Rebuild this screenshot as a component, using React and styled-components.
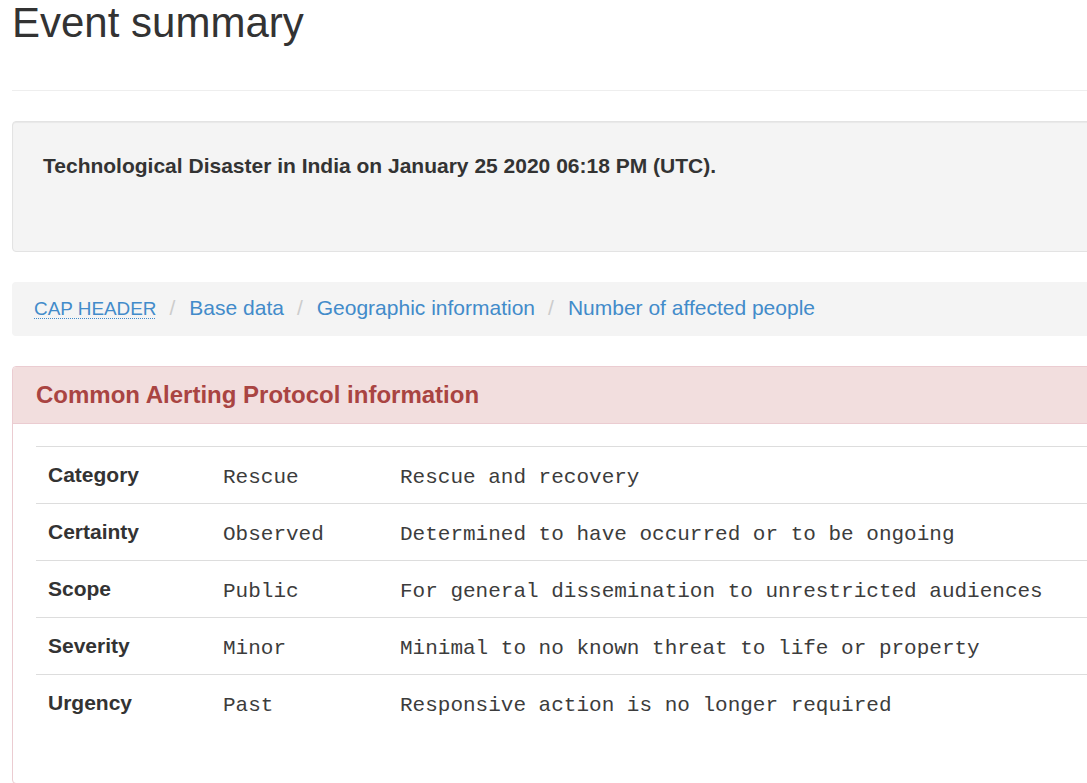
import React from 'react';
import styled, { createGlobalStyle } from 'styled-components';

const GlobalStyle = createGlobalStyle`
  html, body {
    margin: 0;
    padding: 0;
    overflow: hidden;
    background: #fff;
  }
  body {
    font-family: "Liberation Sans", Arial, Helvetica, sans-serif;
    font-size: 21px;
    line-height: 30px;
    color: #333;
  }
`;

const Page = styled.div`
  width: 1220px;
  padding: 0 12px;
`;

const PageHeader = styled.div`
  padding-bottom: 44px;
  border-bottom: 1px solid #eee;
  margin-bottom: 30px;
`;

const Title = styled.h1`
  margin: 0;
  font-size: 42px;
  font-weight: 400;
  line-height: 46px;
  color: #333;
`;

const Well = styled.div`
  background: #f4f4f4;
  border: 1px solid #e3e3e3;
  border-radius: 4px;
  padding: 29px 30px 70px;
  margin-bottom: 30px;
  box-shadow: inset 0 1px 1px rgba(0, 0, 0, 0.05);
`;

const Summary = styled.p`
  margin: 0;
  font-weight: 700;
`;

const Crumbs = styled.ol`
  list-style: none;
  margin: 0 0 30px;
  padding: 11px 22px 12px;
  background: #f4f4f4;
  border-radius: 4px;
  display: flex;
  align-items: baseline;
`;

const Crumb = styled.li`
  color: #428bca;
  & + &::before {
    content: "/";
    color: #ccc;
    padding: 0 14px 0 13px;
  }
`;

const Abbr = styled.abbr`
  font-size: 90%;
  text-decoration: underline dotted #428bca;
  text-underline-offset: 3px;
  text-decoration-thickness: 1px;
`;

const Panel = styled.div`
  border: 1px solid #ebccd1;
  border-radius: 4px;
`;

const PanelHeading = styled.div`
  background: #f2dede;
  border-bottom: 1px solid #ebccd1;
  border-radius: 3px 3px 0 0;
  padding: 15px 23px;
`;

const PanelTitle = styled.h3`
  margin: 0;
  font-size: 24px;
  line-height: 26px;
  font-weight: 700;
  color: #a94442;
`;

const PanelBody = styled.div`
  padding: 22px 0 22px 23px;
`;

const Table = styled.table`
  width: 100%;
  border-collapse: collapse;
  margin-bottom: 30px;
`;

const Cell = styled.td`
  border-top: 1px solid #ddd;
  padding: ${p => (p.$mono ? '16px 12px 10px' : '13px 12px')};
  height: 30px;
  line-height: 30px;
  vertical-align: top;
  white-space: nowrap;
  width: ${p => p.$w || 'auto'};
  font-weight: ${p => (p.$head ? 700 : 400)};
  color: ${p => (p.$mono ? '#3c3c3c' : '#333')};
  font-family: ${p =>
    p.$mono ? '"Liberation Mono", "Courier New", monospace' : 'inherit'};
`;

const rows = [
  ['Category', 'Rescue', 'Rescue and recovery'],
  ['Certainty', 'Observed', 'Determined to have occurred or to be ongoing'],
  ['Scope', 'Public', 'For general dissemination to unrestricted audiences'],
  ['Severity', 'Minor', 'Minimal to no known threat to life or property'],
  ['Urgency', 'Past', 'Responsive action is no longer required'],
];

export default function App() {
  return (
    <Page>
      <GlobalStyle />
      <PageHeader>
        <Title>Event summary</Title>
      </PageHeader>
      <Well>
        <Summary>Technological Disaster in India on January 25 2020 06:18 PM (UTC).</Summary>
      </Well>
      <Crumbs>
        <Crumb><Abbr title="Common Alerting Protocol header">CAP HEADER</Abbr></Crumb>
        <Crumb>Base data</Crumb>
        <Crumb>Geographic information</Crumb>
        <Crumb>Number of affected people</Crumb>
      </Crumbs>
      <Panel>
        <PanelHeading>
          <PanelTitle>Common Alerting Protocol information</PanelTitle>
        </PanelHeading>
        <PanelBody>
          <Table>
            <tbody>
              {rows.map(([label, value, desc]) => (
                <tr key={label}>
                  <Cell $head $w="151px">{label}</Cell>
                  <Cell $mono $w="153px">{value}</Cell>
                  <Cell $mono>{desc}</Cell>
                </tr>
              ))}
            </tbody>
          </Table>
        </PanelBody>
      </Panel>
    </Page>
  );
}
